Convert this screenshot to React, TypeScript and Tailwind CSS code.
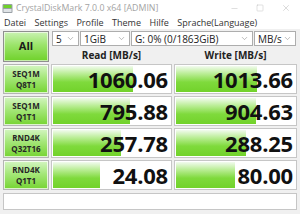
import { ChevronDown, Minus, Square, X } from "lucide-react";

type Row = { a: string; b: string; read: number; write: number };

const rows: Row[] = [
  { a: "SEQ1M", b: "Q8T1", read: 1060.06, write: 1013.66 },
  { a: "SEQ1M", b: "Q1T1", read: 795.88, write: 904.63 },
  { a: "RND4K", b: "Q32T16", read: 257.78, write: 288.25 },
  { a: "RND4K", b: "Q1T1", read: 24.08, write: 80.0 },
];

const font = { fontFamily: '"Open Sans", "Noto Sans", sans-serif' };

// same log scale CrystalDiskMark uses for its meters
const meter = (v: number) => Math.min(1, Math.log10(v * 10) / 6) * 100;

const Select = ({ label, className }: { label: string; className: string }) => (
  <div
    className={`flex h-[15px] items-center justify-between border border-[#adadad] bg-white pl-[3px] pr-[3px] text-[10px] leading-none text-[#222] ${className}`}
  >
    <span>{label}</span>
    <ChevronDown className="h-[9px] w-[9px] text-[#8a8a8a]" strokeWidth={1.5} />
  </div>
);

const Value = ({ v }: { v: number }) => (
  <div className="relative flex items-center justify-end border border-[#c6c6c6] bg-white pr-[3px]">
    <div
      className="absolute top-[1px] bottom-[1px] left-[1px] bg-[linear-gradient(to_bottom,#f2fbef_0%,#bdee9a_28%,#7fda3c_62%,#72d22b_100%)]"
      style={{ width: `${meter(v)}%` }}
    />
    <span className="relative text-[22px] font-bold leading-none tracking-[-0.2px] text-[#111]">
      {v.toFixed(2)}
    </span>
  </div>
);

export default function App() {
  return (
    <div className="flex h-[214px] w-[300px] flex-col overflow-hidden bg-[#f0f0f0]" style={font}>
      {/* title bar */}
      <div className="flex h-[16px] items-center bg-white">
        <svg className="ml-[2px] h-[11px] w-[11px]" viewBox="0 0 11 11">
          <rect x="0.5" y="1" width="10" height="9" rx="1" fill="#9aa0a6" />
          <rect x="1.5" y="2" width="8" height="3" fill="#6fd12a" />
          <rect x="1.5" y="6" width="8" height="3" fill="#dfe3e6" />
        </svg>
        <span className="ml-[3px] text-[8.8px] leading-none text-[#a3a3a3]">CrystalDiskMark 7.0.0 x64 [ADMIN]</span>
        <div className="ml-auto mr-[9px] flex items-center gap-[17px] text-[#a8a8a8]">
          <Minus className="h-[9px] w-[9px]" strokeWidth={1} />
          <Square className="h-[8px] w-[8px]" strokeWidth={1} />
          <X className="h-[10px] w-[10px]" strokeWidth={1} />
        </div>
      </div>
      {/* menu */}
      <div className="flex h-[13px] items-center gap-[8.5px] bg-white pl-[4px] text-[9px] leading-none text-[#333]">
        <span>Datei</span>
        <span>Settings</span>
        <span>Profile</span>
        <span>Theme</span>
        <span>Hilfe</span>
        <span>Sprache(Language)</span>
      </div>

      <div className="mt-[2px] grid grid-cols-[46px_121px_123px] grid-rows-[15px_14px_30px_30px_30px_30px] gap-x-[2px] gap-y-[2px] px-[3px]">
        <div className="row-span-2 flex items-center justify-center border border-[#8f8f8f] bg-[linear-gradient(to_bottom,#c9f2b2_0%,#9be46a_45%,#6fd12a_100%)] shadow-[inset_0_0_0_1px_rgba(255,255,255,0.6)]">
          <span className="text-[11px] font-bold text-[#1a1a1a]">All</span>
        </div>
        <div className="col-span-2 flex gap-[1px] pl-[1px]">
          <Select label="5" className="w-[27px]" />
          <Select label="1GiB" className="w-[50px]" />
          <Select label="G: 0% (0/1863GiB)" className="w-[122px]" />
          <Select label="MB/s" className="w-[42px]" />
        </div>
        <div className="flex items-center justify-center text-[10px] font-bold leading-none text-[#222]">Read [MB/s]</div>
        <div className="flex items-center justify-center text-[10px] font-bold leading-none text-[#222]">Write [MB/s]</div>

        {rows.map((r, i) => (
          <div key={i} className="contents">
            <div className="flex flex-col items-center justify-center border border-[#b4b4b4] bg-[linear-gradient(to_bottom,#d4f5c2_0%,#a5e77a_45%,#76d432_100%)] shadow-[inset_0_0_0_1px_rgba(255,255,255,0.75)] text-[8px] font-bold leading-[11px] text-[#262626]">
              <span>{r.a}</span>
              <span>{r.b}</span>
            </div>
            <Value v={r.read} />
            <Value v={r.write} />
          </div>
        ))}
      </div>

      {/* status bar */}
      <div className="mx-[3px] mt-[3px] h-[17px] border border-[#c6c6c6] bg-white" />
    </div>
  );
}
